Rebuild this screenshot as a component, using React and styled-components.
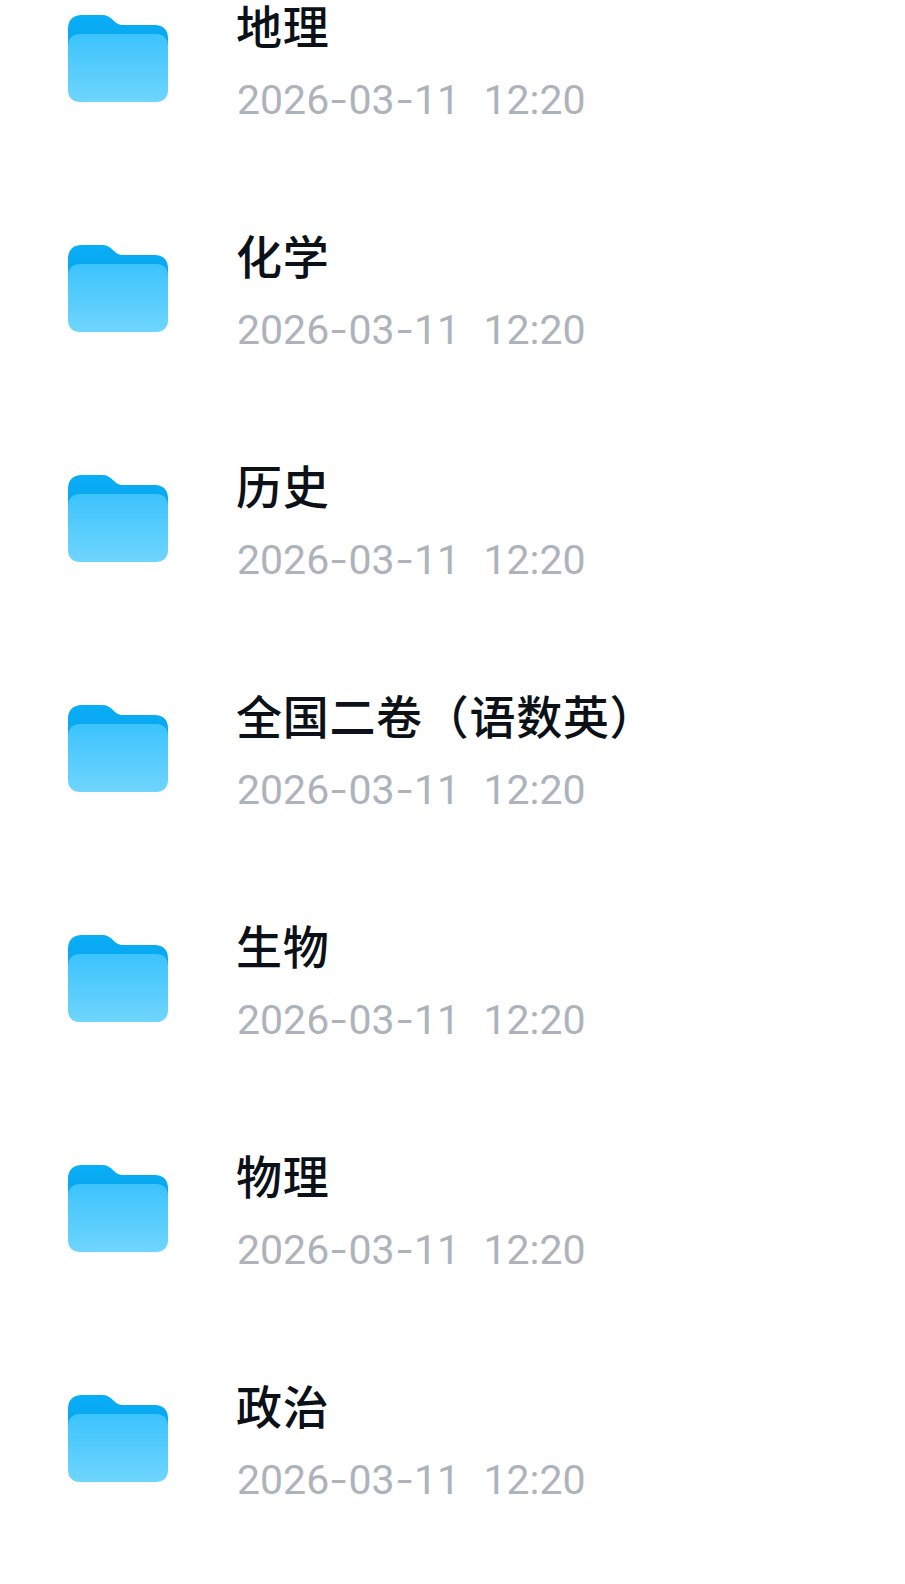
import React from "react";
import styled, { createGlobalStyle } from "styled-components";

const GlobalStyle = createGlobalStyle`
  html, body {
    margin: 0;
    padding: 0;
    background: #ffffff;
  }
`;

const List = styled.ul`
  width: 905px;
  height: 1584px;
  margin: 0;
  padding: 0;
  list-style: none;
  overflow: hidden;
  background: #ffffff;
`;

const Row = styled.li`
  height: 230px;
  padding-left: 68px;
  display: flex;
  align-items: flex-start;
  box-sizing: border-box;
`;

const IconWrap = styled.div`
  width: 100px;
  height: 87px;
  margin-top: 15px;
  flex: none;
`;

const Info = styled.div`
  margin-left: 69px;
  display: flex;
  flex-direction: column;
`;

const Title = styled.div`
  height: 48px;
  margin-left: -1px;
  font-family: "Noto Sans CJK SC", "Liberation Sans", sans-serif;
  font-size: 46px;
  font-weight: 500;
  line-height: 48px;
  letter-spacing: 0.7px;
  color: #0c1118;
  white-space: nowrap;
`;

const Stamp = styled.div`
  margin-top: 28px;
  font-family: Roboto, "Noto Sans", sans-serif;
  font-size: 41px;
  line-height: 48px;
  word-spacing: 1.5px;
  color: #aeb3bb;
  white-space: pre;
`;

const Dash = styled.span`
  display: inline-block;
  margin: 0 4px;
  transform: scaleX(1.35);
`;

const folders = ["地理", "化学", "历史", "全国二卷（语数英）", "生物", "物理", "政治"];

const FolderIcon = ({ id }) => (
  <svg width="100" height="87" viewBox="0 0 100 87">
    <defs>
      <linearGradient id={`back-${id}`} x1="0" y1="0" x2="0" y2="1">
        <stop offset="0" stopColor="#08aef6" />
        <stop offset="1" stopColor="#0aa4ec" />
      </linearGradient>
      <linearGradient id={`front-${id}`} x1="0" y1="0" x2="0" y2="1">
        <stop offset="0" stopColor="#3cc3fd" />
        <stop offset="1" stopColor="#6fd5fd" />
      </linearGradient>
    </defs>
    <path
      d="M14 0H34C39 0 42 2 45 5C47.500 7.500 50 10 55 10H87C95 10 100 15 100 23V40H0V14C0 5 5 0 14 0Z"
      fill={`url(#back-${id})`}
    />
    <path
      d="M12 19H88C95 19 100 23 100 31V75C100 83 95 87 88 87H12C5 87 0 83 0 75V31C0 23 5 19 12 19Z"
      fill={`url(#front-${id})`}
    />
  </svg>
);

const App = () => {
  return (
    <>
      <GlobalStyle />
      <List>
        {folders.map((name, i) => (
          <Row key={name}>
            <IconWrap>
              <FolderIcon id={i} />
            </IconWrap>
            <Info>
              <Title>{name}</Title>
              <Stamp>
                2026<Dash>-</Dash>03<Dash>-</Dash>11{"  "}12:20
              </Stamp>
            </Info>
          </Row>
        ))}
      </List>
    </>
  );
};

export default App;
